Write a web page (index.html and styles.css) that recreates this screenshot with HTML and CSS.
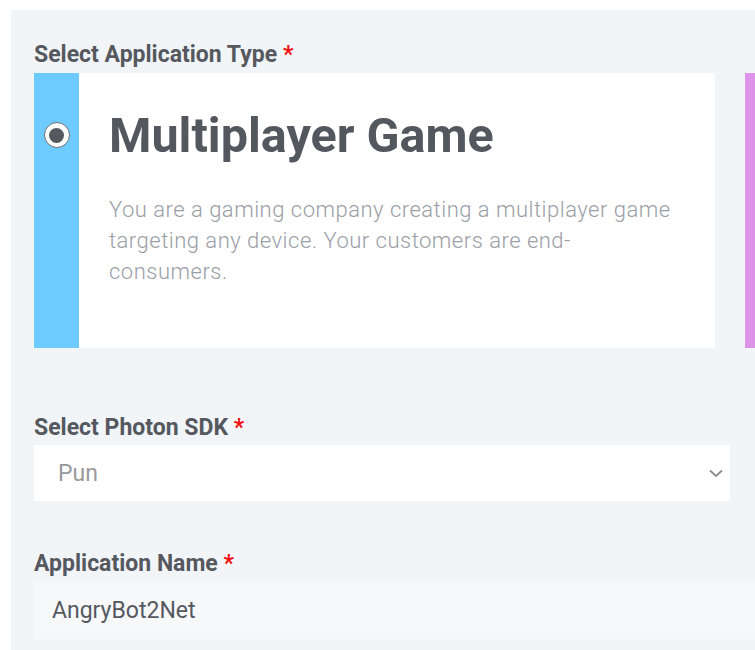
FILE: index.html
```html
<!DOCTYPE html>
<html>
<head>
<meta charset="utf-8">
<link rel="stylesheet" href="styles.css">
</head>
<body>
<div class="panel">
  <div class="field-label">Select Application Type <span class="req">*</span></div>
  <div class="cards">
    <div class="card">
      <div class="strip strip-blue"><span class="radio"><span class="dot"></span></span></div>
      <div class="card-body">
        <div class="card-title">Multiplayer Game</div>
        <div class="card-desc">You are a gaming company creating a multiplayer game targeting any device. Your customers are end-consumers.</div>
      </div>
    </div>
    <div class="card card-next">
      <div class="strip strip-purple"></div>
    </div>
  </div>
  <div class="field-label label-sdk">Select Photon SDK <span class="req">*</span></div>
  <div class="select">
    <span class="select-value">Pun</span>
    <svg class="chev" width="14" height="9" viewBox="0 0 14 9"><path d="M1 1.5 L7 7 L13 1.5" fill="none" stroke="#8a8d91" stroke-width="1.8"/></svg>
  </div>
  <div class="field-label label-name">Application Name <span class="req">*</span></div>
  <div class="input">AngryBot2Net</div>
</div>
</body>
</html>
```
FILE: styles.css
```css
html, body {
  margin: 0;
  padding: 0;
  background: #ffffff;
  overflow: hidden;
}
body {
  font-family: Roboto, "Liberation Sans", sans-serif;
  width: 755px;
  height: 650px;
}
.panel {
  margin: 10px 0 0 11px;
  width: 760px;
  height: 640px;
  background: #f2f5f8;
  padding: 31px 0 0 23px;
  box-sizing: border-box;
}
.field-label {
  font-size: 23px;
  font-weight: 700;
  color: #55595f;
  line-height: 27px;
}
.req {
  color: #ee1111;
}
.cards {
  display: flex;
  gap: 30px;
  margin-top: 5px;
}
.card {
  display: flex;
  width: 681px;
  height: 275px;
  background: #ffffff;
  flex-shrink: 0;
}
.card-next {
  width: 200px;
}
.strip {
  width: 45px;
  flex-shrink: 0;
  display: flex;
  justify-content: center;
  padding-top: 49px;
  box-sizing: border-box;
}
.strip-blue { background: #6ecbff; }
.strip-purple { background: #dd94e8; }
.radio {
  width: 26px;
  height: 26px;
  border-radius: 50%;
  background: #ffffff;
  border: 1.5px solid #6b6f75;
  box-sizing: border-box;
  display: flex;
  align-items: center;
  justify-content: center;
}
.dot {
  width: 15px;
  height: 15px;
  border-radius: 50%;
  background: #55595f;
}
.card-body {
  padding: 35px 36px 0 30px;
}
.card-title {
  font-size: 48.5px;
  font-weight: 700;
  color: #53575e;
  line-height: 56px;
}
.card-desc {
  margin-top: 30px;
  font-size: 22px;
  font-weight: 300;
  letter-spacing: 0.5px;
  color: #9a9ea6;
  line-height: 31px;
}
.label-sdk {
  margin-top: 66px;
}
.select {
  margin-top: 4px;
  width: 696px;
  height: 56px;
  background: #ffffff;
  display: flex;
  align-items: center;
  justify-content: space-between;
  padding: 0 7px 0 24px;
  box-sizing: border-box;
}
.select-value {
  font-size: 23px;
  color: #97999c;
}
.chev {
  display: block;
}
.label-name {
  margin-top: 49px;
}
.input {
  margin-top: 4px;
  height: 58px;
  background: #f7f8fa;
  display: flex;
  align-items: center;
  padding-left: 18px;
  font-size: 23px;
  color: #55595f;
}
```
